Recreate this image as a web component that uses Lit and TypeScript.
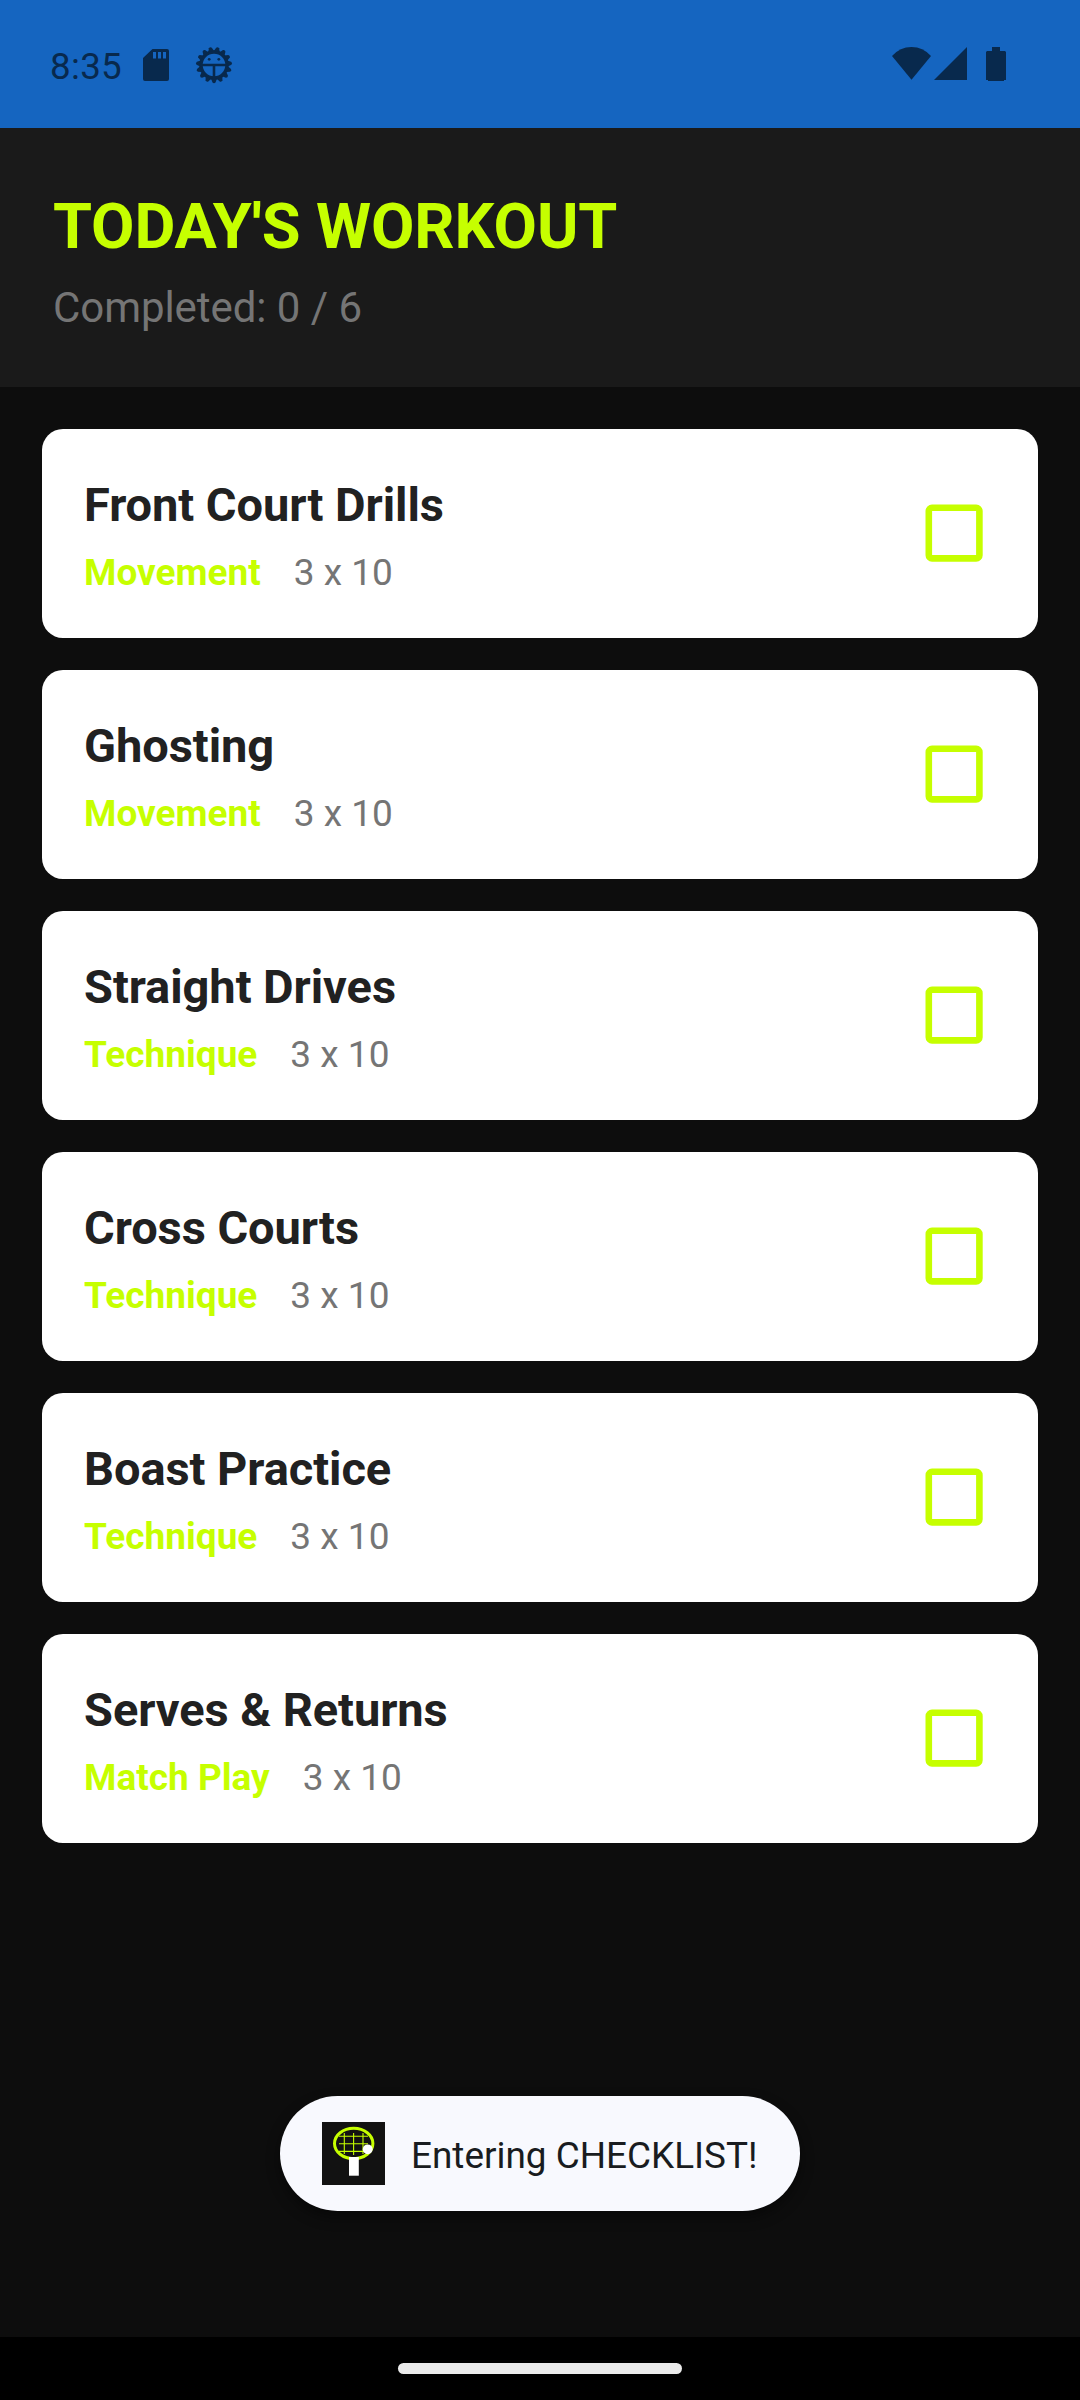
import { LitElement, html, css, svg } from "lit";
import { customElement, property, state } from "lit/decorators.js";

interface Exercise {
  name: string;
  category: string;
  reps: string;
  done: boolean;
}

const EXERCISES: Exercise[] = [
  { name: "Front Court Drills", category: "Movement", reps: "3 x 10", done: false },
  { name: "Ghosting", category: "Movement", reps: "3 x 10", done: false },
  { name: "Straight Drives", category: "Technique", reps: "3 x 10", done: false },
  { name: "Cross Courts", category: "Technique", reps: "3 x 10", done: false },
  { name: "Boast Practice", category: "Technique", reps: "3 x 10", done: false },
  { name: "Serves & Returns", category: "Match Play", reps: "3 x 10", done: false },
];

@customElement("status-bar")
export class StatusBar extends LitElement {
  static styles = css`
    :host {
      display: flex;
      box-sizing: border-box;
      height: 128px;
      padding: 46px 74px 0 50px;
      background: #1565c0;
      color: #08294d;
      fill: currentColor;
    }
    .group {
      display: flex;
      align-items: flex-start;
      height: 38px;
    }
    .right {
      margin-left: auto;
    }
    .clock {
      width: 93px;
      font-size: 36.75px;
      line-height: 42px;
      letter-spacing: 0.3px;
    }
    svg {
      display: block;
      flex: none;
    }
    .gear {
      margin-left: 26px;
    }
    .battery {
      margin-left: 19px;
    }
    .signal {
      margin-left: 3px;
    }
    .line {
      fill: none;
      stroke: currentColor;
    }
  `;

  render() {
    const teeth = Array.from({ length: 15 }, (_, i) => i * 24 + 12);
    return html`
      <div class="group">
        <span class="clock">8:35</span>
        <svg width="26" height="38" viewBox="0 0 26 38">
          <path
            fill-rule="evenodd"
            d="M9.5 3H24Q26 3 26 5V33Q26 35 24 35H2Q0 35 0 33V12ZM10 6V12.5H13V6ZM15 6V12.5H18V6ZM20 6V12.5H23V6Z"
          />
        </svg>
        <svg class="gear" width="38" height="38" viewBox="-19 -19 38 38">
          <circle class="line" r="13" stroke-width="3.4" />
          ${teeth.map(
            (a) => svg`<path transform="rotate(${a})" d="M-3 -13.6L-1.5 -17.4Q0 -19 1.5 -17.4L3 -13.6Z" />`
          )}
          <path class="line" stroke-width="2.6" d="M-13 0H13M0 0V14" />
          <circle cx="-4.8" cy="-5.7" r="1.4" />
          <circle cx="4.8" cy="-5.7" r="1.4" />
        </svg>
      </div>
      <div class="group right">
        <svg width="39" height="38" viewBox="0 0 39 38">
          <path d="M0 10Q8 1 19.5 1T39 10L19.5 33.7Z" />
        </svg>
        <svg class="signal" width="33" height="38" viewBox="0 0 33 38">
          <path d="M33 1V34H0Z" />
        </svg>
        <svg class="battery" width="20" height="38" viewBox="0 0 20 38">
          <path d="M6 1H14V5H19L20 6V34H18V35H2V34H0V6L1 5H6Z" />
        </svg>
      </div>
    `;
  }
}

@customElement("exercise-card")
export class ExerciseCard extends LitElement {
  @property({ attribute: false }) exercise!: Exercise;

  static styles = css`
    :host {
      display: flex;
      align-items: center;
      justify-content: space-between;
      box-sizing: border-box;
      height: 209px;
      padding: 0 55px 0 42px;
      border-radius: 21px;
      background: #fff;
    }
    .info {
      display: flex;
      flex-direction: column;
      gap: 19px;
      padding-top: 4px;
    }
    .name {
      font-size: 47px;
      line-height: 55px;
      font-weight: 700;
      letter-spacing: -0.06px;
      color: #212121;
    }
    .meta {
      display: flex;
      gap: 33px;
      font-size: 37px;
      line-height: 43px;
      color: #757575;
    }
    .category {
      font-weight: 700;
      color: #c6ff00;
    }
    .check {
      display: block;
      margin-bottom: 1px;
    }
  `;

  render() {
    const { name, category, reps, done } = this.exercise;
    return html`
      <div class="info">
        <div class="name">${name}</div>
        <div class="meta">
          <span class="category">${category}</span>
          <span>${reps}</span>
        </div>
      </div>
      <svg class="check" width="58" height="58" viewBox="0 0 58 58">
        <rect x="3.8" y="3.8" width="50.6" height="50.6" rx="3.2" fill=${done ? "#c6ff00" : "none"} stroke="#c6ff00" stroke-width="6.6" />
      </svg>
    `;
  }
}

@customElement("toast-message")
export class ToastMessage extends LitElement {
  @property() text = "";

  static styles = css`
    :host {
      display: flex;
      align-items: center;
      box-sizing: border-box;
      width: 520px;
      height: 115px;
      padding-left: 42px;
      gap: 26px;
      border-radius: 58px;
      background: #f8f9fe;
      box-shadow: 0 6px 14px rgba(0, 0, 0, 0.45);
      color: #191c20;
      line-height: 52px;
      white-space: nowrap;
    }
    .logo {
      display: block;
      flex: none;
    }
    .label {
      padding-top: 4px;
      font-size: 36.9px;
    }
    .frame {
      fill: none;
      stroke: #c6ff00;
      stroke-width: 3;
    }
    .strings {
      fill: none;
      stroke: #c6ff00;
      stroke-width: 1.1;
    }
  `;

  render() {
    return html`
      <svg class="logo" width="63" height="63" viewBox="0 0 63 63">
        <rect width="63" height="63" fill="#121212" />
        <ellipse class="frame" cx="31.7" cy="21.5" rx="19.2" ry="15.2" />
        <path class="strings" d="M22.3 11V32M31.6 11V33M41 11V32M17 14.3H46M17 21.8H46M17 29.4H46" />
        <rect x="27" y="35" width="9.8" height="18.7" fill="#fff" />
        <circle cx="45.7" cy="27.3" r="4.9" fill="#fff" />
      </svg>
      <span class="label">${this.text}</span>
    `;
  }
}

@customElement("app-root")
export class AppRoot extends LitElement {
  @state() private exercises = EXERCISES;

  static styles = css`
    :host {
      display: flex;
      flex-direction: column;
      position: relative;
      width: 1080px;
      height: 2400px;
      overflow: hidden;
      background: #0d0d0d;
      font-family: Roboto, sans-serif;
    }
    .header {
      display: flex;
      flex-direction: column;
      gap: 19px;
      box-sizing: border-box;
      height: 259px;
      padding: 62px 53px 0;
      background: #1a1a1a;
    }
    .title {
      margin: 0;
      font-size: 63px;
      line-height: 74px;
      font-weight: 700;
      letter-spacing: -0.1px;
      color: #c6ff00;
    }
    .progress {
      font-size: 42px;
      line-height: 49px;
      letter-spacing: -0.06px;
      color: #757575;
    }
    .list {
      display: flex;
      flex: 1;
      flex-direction: column;
      gap: 32px;
      padding: 42px;
    }
    .toast {
      position: absolute;
      left: 280px;
      top: 2096px;
    }
    .nav {
      display: flex;
      justify-content: center;
      box-sizing: border-box;
      height: 63px;
      padding-top: 26px;
      background: #000;
    }
    .handle {
      width: 284px;
      height: 11px;
      border-radius: 5.5px;
      background: #ebebeb;
    }
  `;

  render() {
    const done = this.exercises.filter((e) => e.done).length;
    return html`
      <status-bar></status-bar>
      <header class="header">
        <h1 class="title">TODAY'S WORKOUT</h1>
        <div class="progress">Completed: ${done} / ${this.exercises.length}</div>
      </header>
      <main class="list">
        ${this.exercises.map((e) => html`<exercise-card .exercise=${e}></exercise-card>`)}
      </main>
      <div class="nav"><div class="handle"></div></div>
      <toast-message class="toast" text="Entering CHECKLIST!"></toast-message>
    `;
  }
}
